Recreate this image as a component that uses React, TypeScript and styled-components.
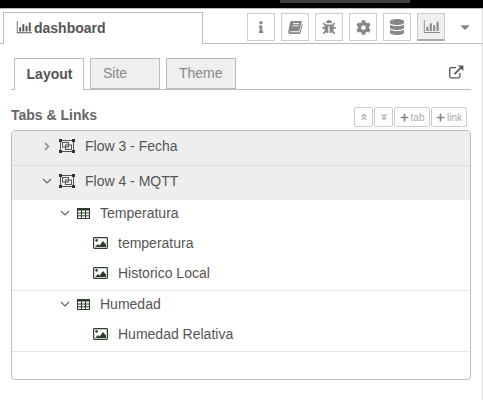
import React from "react";
import styled, { createGlobalStyle } from "styled-components";
import { FaInfo, FaBug, FaCog, FaDatabase, FaPlus, FaAngleDoubleUp, FaAngleDoubleDown, FaCaretDown } from "react-icons/fa";

const Global = createGlobalStyle`
  html, body { margin: 0; padding: 0; background: #fff; }
  body { font-family: "Liberation Sans", Arial, sans-serif; font-size: 14px; color: #555; }
`;

const Page = styled.div`
  width: 483px;
  height: 400px;
  overflow: hidden;
  display: flex;
  flex-direction: column;
  background: #fff;
`;
const TopStrip = styled.div`
  height: 8px;
  background: #000;
  flex: none;
  padding-left: 280px;
`;
const TopStripBar = styled.div`
  width: 130px;
  height: 3px;
  background: #3f3f3f;
`;
const Sidebar = styled.div`
  flex: 1;
  border-top: 1px solid #bbb;
  border-right: 1px solid #ddd;
  display: flex;
  flex-direction: column;
`;
const TabBar = styled.div`
  height: 35px;
  flex: none;
  box-sizing: border-box;
  border-bottom: 1px solid #bbb;
  display: flex;
  align-items: flex-start;
  padding: 3px 0 0 3px;
`;
const MainTab = styled.div`
  width: 200px;
  height: 32px;
  box-sizing: border-box;
  border: 1px solid #bbb;
  border-bottom: none;
  background: #fff;
  display: flex;
  align-items: center;
  padding: 0 0 2px 12px;
  gap: 2px;
  font-weight: bold;
  font-size: 14px;
  color: #555;
`;
const ToolButtons = styled.div`
  margin-left: auto;
  display: flex;
  gap: 6px;
  padding-right: 3px;
  margin-top: 1px;
  align-items: flex-start;
`;
const ToolButton = styled.div<{ $active?: boolean }>`
  width: 28px;
  height: 28px;
  box-sizing: border-box;
  border: 1px solid #ccc;
  border-bottom: ${(p) => (p.$active ? "2px solid #aaa" : "1px solid #ccc")};
  background: ${(p) => (p.$active ? "#efefef" : "#fff")};
  color: #888;
  display: flex;
  align-items: center;
  justify-content: center;
`;
const CaretSlot = styled.div`
  width: 28px;
  height: 28px;
  display: flex;
  align-items: center;
  justify-content: center;
  color: #888;
`;
const Content = styled.div`
  flex: 1;
  padding: 14px 11px 0;
  display: flex;
  flex-direction: column;
`;
const SubTabs = styled.div`
  height: 32px;
  flex: none;
  box-sizing: border-box;
  border-bottom: 1px solid #bbb;
  display: flex;
  align-items: flex-start;
  padding-left: 3px;
  gap: 6px;
`;
const SubTab = styled.div<{ $active?: boolean }>`
  width: 70px;
  height: ${(p) => (p.$active ? "32px" : "31px")};
  box-sizing: border-box;
  border: 1px solid #bbb;
  border-bottom: ${(p) => (p.$active ? "none" : "1px solid #bbb")};
  background: ${(p) => (p.$active ? "#fff" : "#efefef")};
  color: ${(p) => (p.$active ? "#555" : "#888")};
  font-weight: ${(p) => (p.$active ? "bold" : "normal")};
  display: flex;
  align-items: center;
  justify-content: ${(p) => (p.$active ? "center" : "flex-start")};
  padding-left: ${(p) => (p.$active ? "1px" : "12px")};
  padding-bottom: 1px;
  font-size: 14px;
`;
const PopOut = styled.div`
  margin-left: auto;
  margin-right: 7px;
  margin-top: 7px;
  color: #555;
  display: flex;
`;
const HeaderRow = styled.div`
  height: 20px;
  margin-top: 17px;
  display: flex;
  align-items: center;
  padding-right: 4px;
  flex: none;
`;
const Heading = styled.div`
  font-weight: bold;
  font-size: 14px;
  color: #666;
  padding-bottom: 4px;
`;
const HeadButtons = styled.div`
  margin-left: auto;
  display: flex;
  gap: 1px;
`;
const SmallButton = styled.div<{ $w: number }>`
  width: ${(p) => p.$w}px;
  height: 20px;
  box-sizing: border-box;
  border: 1px solid #ccc;
  border-radius: 2px;
  display: flex;
  align-items: center;
  justify-content: center;
  gap: 2px;
  font-size: 10px;
  color: #aaa;
`;
const Panel = styled.div`
  margin-top: 3px;
  height: 250px;
  box-sizing: border-box;
  border: 1px solid #bbb;
  border-radius: 4px;
  overflow: hidden;
  flex: none;
`;
const FlowRow = styled.div<{ $divider?: boolean }>`
  height: ${(p) => (p.$divider ? "35px" : "34px")};
  box-sizing: border-box;
  background: #eee;
  border-bottom: ${(p) => (p.$divider ? "1px solid #ddd" : "none")};
  display: flex;
  align-items: center;
  padding-left: 29px;
  padding-bottom: 4px;
`;
const Caret = styled.span<{ $light?: boolean }>`
  width: 12px;
  display: flex;
  justify-content: center;
  color: ${(p) => (p.$light ? "#999" : "#666")};
`;
const FlowIcon = styled.span`
  display: flex;
  margin-left: 6px;
  margin-right: 10px;
  color: #444;
`;
const Group = styled.div<{ $h: number }>`
  height: ${(p) => p.$h}px;
  box-sizing: border-box;
  border-bottom: 1px solid #e6e6e6;
`;
const GroupRow = styled.div`
  height: 28px;
  box-sizing: border-box;
  padding-bottom: 2px;
  display: flex;
  align-items: center;
  padding-left: 47px;
`;
const GroupIcon = styled.span`
  display: flex;
  margin-left: 6px;
  margin-right: 10px;
  color: #2f3f2f;
`;
const WidgetRow = styled.div`
  height: 30px;
  display: flex;
  align-items: center;
  padding-left: 81px;
`;
const WidgetIcon = styled.span`
  display: flex;
  margin-right: 10px;
  color: #2f3f2f;
`;
const Label = styled.span`
  font-size: 14px;
  color: #555;
`;

const ChartIcon = ({ size = 16 }: { size?: number }) => (
  <svg width={size} height={size * 0.8} viewBox="0 0 20 16" fill="currentColor">
    <path d="M1 0h1v14h18v1.2H1z" />
    <rect x="4" y="8" width="2.4" height="5" />
    <rect x="8" y="4" width="2.4" height="9" />
    <rect x="12" y="6" width="2.4" height="7" />
    <rect x="16" y="2" width="2.4" height="11" />
  </svg>
);
const BookIcon = () => (
  <svg width="15" height="13" viewBox="0 0 15 13" fill="currentColor">
    <path d="M3.4 0H14l-2.6 9.4c-.2.6-.6.9-1.2.9H2.6c-.7 0-.8.9 0 .9h9l2.4-8.4.8.6-2.5 9c-.1.4-.4.6-.8.6H2C.7 13 0 12 .3 10.6L2.2 1C2.4.4 2.8 0 3.4 0z" />
    <path d="M5.2 2.6h6M4.6 4.8h6" stroke="#fff" strokeWidth="0.9" />
  </svg>
);
const GridIcon = () => (
  <svg width="13" height="11" viewBox="0 0 13 11" fill="none" stroke="currentColor" strokeWidth="1">
    <rect x="0.5" y="0.5" width="12" height="10" />
    <path d="M0 1.5h13" strokeWidth="2" />
    <path d="M0 5h13M0 7.8h13M4.5 1v10M8.5 1v10" />
  </svg>
);
const PictureIcon = () => (
  <svg width="15" height="12" viewBox="0 0 15 12">
    <rect x="0.6" y="0.6" width="13.8" height="10.8" rx="0.8" fill="#fff" stroke="currentColor" strokeWidth="1.2" />
    <circle cx="3.6" cy="3.4" r="1.3" fill="currentColor" />
    <path d="M2 10l3-3 1.600 1.400L10 4l3 3.400V10z" fill="currentColor" />
  </svg>
);
const ObjectGroupIcon = () => (
  <svg width="16" height="14" viewBox="0 0 16 14" fill="none" stroke="#555">
    <rect x="1.5" y="1.5" width="13" height="11" />
    <rect x="3.5" y="3.5" width="6" height="4.5" />
    <rect x="6.5" y="6" width="6" height="4.5" />
    <g fill="#333" stroke="none">
      <rect x="0" y="0" width="3" height="3" />
      <rect x="13" y="0" width="3" height="3" />
      <rect x="0" y="11" width="3" height="3" />
      <rect x="13" y="11" width="3" height="3" />
    </g>
  </svg>
);
const ChevronRight = () => (
  <svg width="6" height="9" viewBox="0 0 6 9" fill="none" stroke="currentColor" strokeWidth="1.800">
    <path d="M1 1l3.500 3.500L1 8" />
  </svg>
);
const ChevronDown = () => (
  <svg width="10" height="6" viewBox="0 0 10 6" fill="none" stroke="currentColor" strokeWidth="1.2">
    <path d="M1 1l4 4 4-4" />
  </svg>
);
const ExternalIcon = () => (
  <svg width="15" height="14" viewBox="0 0 15 14" fill="none" stroke="currentColor" strokeWidth="1.3">
    <path d="M7 2.600H2.200c-.9 0-1.500.6-1.500 1.500v7.200c0 .9.600 1.500 1.500 1.500h7.200c.9 0 1.500-.6 1.500-1.500V8" />
    <path d="M5.500 9.200L12.500 2.200" strokeWidth="1.8" />
    <path d="M9 .6h5.400V6z" fill="currentColor" stroke="none" />
  </svg>
);

export default function App() {
  return (
    <Page>
      <Global />
      <TopStrip><TopStripBar /></TopStrip>
      <Sidebar>
        <TabBar>
          <MainTab><ChartIcon size={16} />dashboard</MainTab>
          <ToolButtons>
            <ToolButton><FaInfo size={12} /></ToolButton>
            <ToolButton><BookIcon /></ToolButton>
            <ToolButton><FaBug size={14} /></ToolButton>
            <ToolButton><FaCog size={15} /></ToolButton>
            <ToolButton><FaDatabase size={16} /></ToolButton>
            <ToolButton $active><ChartIcon size={17} /></ToolButton>
            <CaretSlot><FaCaretDown size={14} /></CaretSlot>
          </ToolButtons>
        </TabBar>
        <Content>
          <SubTabs>
            <SubTab $active>Layout</SubTab>
            <SubTab>Site</SubTab>
            <SubTab>Theme</SubTab>
            <PopOut><ExternalIcon /></PopOut>
          </SubTabs>
          <HeaderRow>
            <Heading>Tabs &amp; Links</Heading>
            <HeadButtons>
              <SmallButton $w={19}><FaAngleDoubleUp size={8} /></SmallButton>
              <SmallButton $w={19}><FaAngleDoubleDown size={8} /></SmallButton>
              <SmallButton $w={36}><FaPlus size={9} color="#888" />tab</SmallButton>
              <SmallButton $w={36}><FaPlus size={9} color="#888" />link</SmallButton>
            </HeadButtons>
          </HeaderRow>
          <Panel>
            <FlowRow $divider>
              <Caret $light><ChevronRight /></Caret>
              <FlowIcon><ObjectGroupIcon /></FlowIcon>
              <Label>Flow 3 - Fecha</Label>
            </FlowRow>
            <FlowRow>
              <Caret><ChevronDown /></Caret>
              <FlowIcon><ObjectGroupIcon /></FlowIcon>
              <Label>Flow 4 - MQTT</Label>
            </FlowRow>
            <Group $h={91}>
              <GroupRow>
                <Caret><ChevronDown /></Caret>
                <GroupIcon><GridIcon /></GroupIcon>
                <Label>Temperatura</Label>
              </GroupRow>
              <WidgetRow><WidgetIcon><PictureIcon /></WidgetIcon><Label>temperatura</Label></WidgetRow>
              <WidgetRow><WidgetIcon><PictureIcon /></WidgetIcon><Label>Historico Local</Label></WidgetRow>
            </Group>
            <Group $h={61}>
              <GroupRow>
                <Caret><ChevronDown /></Caret>
                <GroupIcon><GridIcon /></GroupIcon>
                <Label>Humedad</Label>
              </GroupRow>
              <WidgetRow><WidgetIcon><PictureIcon /></WidgetIcon><Label>Humedad Relativa</Label></WidgetRow>
            </Group>
          </Panel>
        </Content>
      </Sidebar>
    </Page>
  );
}
